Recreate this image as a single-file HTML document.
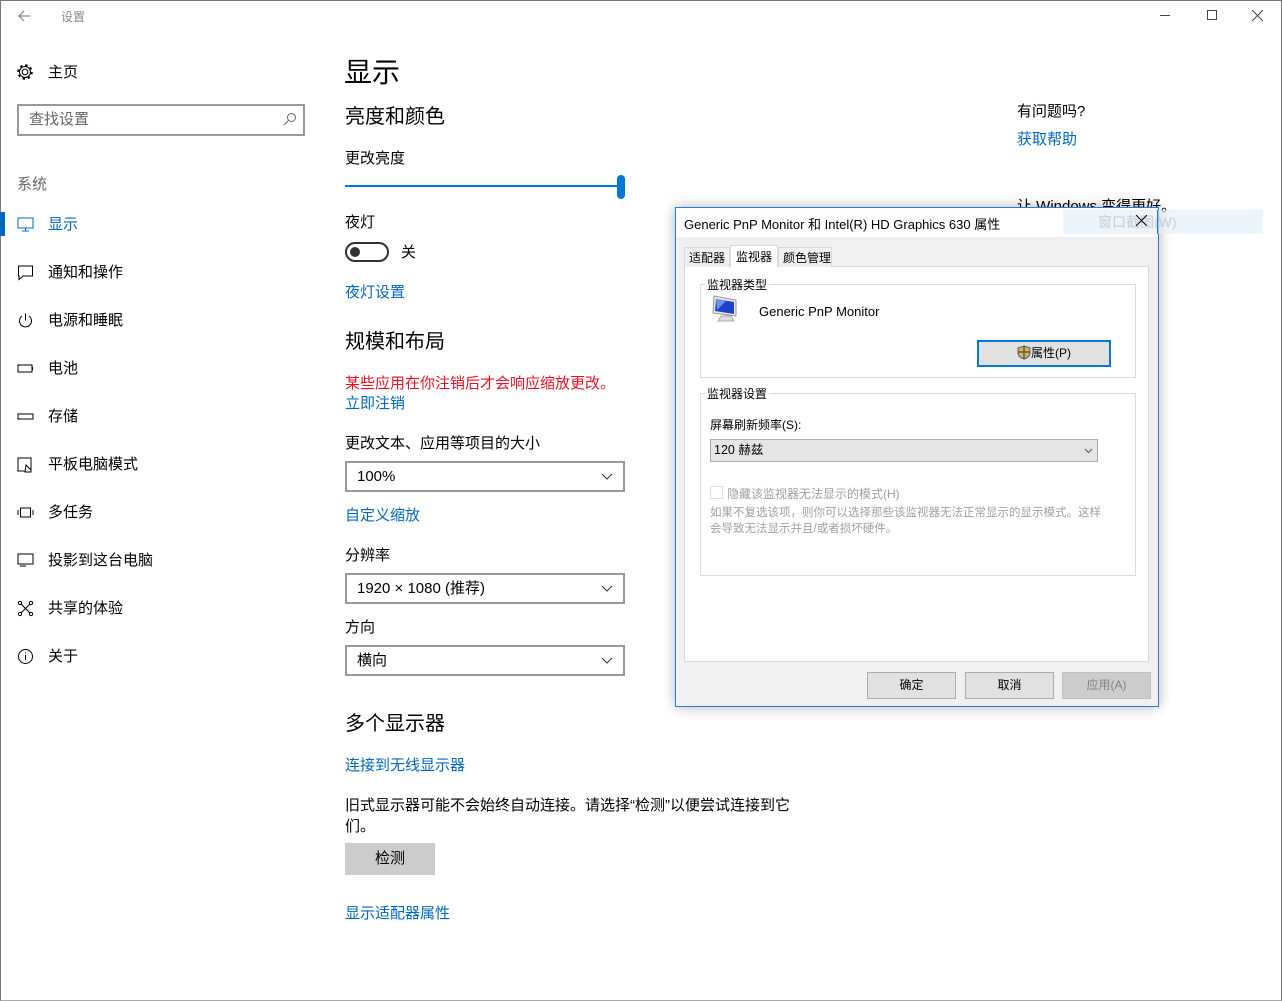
<!DOCTYPE html>
<html><head><meta charset="utf-8"><style>
*{margin:0;padding:0;box-sizing:border-box}
body{width:1282px;height:1001px;background:#fff;position:relative;overflow:hidden;font-family:"Liberation Sans","Noto Sans CJK SC",sans-serif;color:#000}
.a{position:absolute;white-space:nowrap}
.n{font-size:15px;line-height:20px}
.blue{color:#0067c0}
.ic{position:absolute;left:17px;width:17px;height:17px}
.dd{position:absolute;left:345px;width:280px;height:31px;border:2px solid #999;font-size:15px;line-height:27px;padding-left:10px}
.dd svg{position:absolute;right:10px;top:10px}
.dlg{font-size:12px}
.btn{position:absolute;height:27px;background:#e1e1e1;border:1px solid #adadad;text-align:center;line-height:25px;font-size:12px}
</style></head><body>
<div class="a" style="left:0;top:0;width:1282px;height:1001px;border:1px solid #777;border-bottom-color:#aaa"></div>
<svg class="a" style="left:17px;top:9px" width="14" height="14" viewBox="0 0 14 14"><path d="M13 7H2M7 2L2 7l5 5" stroke="#888" fill="none" stroke-width="1.2"/></svg>
<div class="a" style="left:61px;top:8px;font-size:12px;color:#888">设置</div>
<div class="a" style="left:1160px;top:15px;width:10px;height:1px;background:#444"></div>
<div class="a" style="left:1207px;top:10px;width:10px;height:10px;border:1px solid #444"></div>
<svg class="a" style="left:1252px;top:10px" width="11" height="11"><path d="M0 0L11 11M11 0L0 11" stroke="#444"/></svg>

<svg class="ic" style="top:63px;left:16px;width:18px;height:18px" viewBox="0 0 17 17"><circle cx="8.5" cy="8.5" r="2.7" fill="none" stroke="#000"/><circle cx="8.5" cy="8.5" r="6.3" fill="none" stroke="#000" stroke-width="2" stroke-dasharray="2.2 2.75"/><circle cx="8.5" cy="8.5" r="5.2" fill="none" stroke="#000"/></svg>
<div class="a n" style="left:48px;top:63px">主页</div>
<div class="a" style="left:17px;top:104px;width:288px;height:32px;border:2px solid #999;font-size:15px;line-height:28px;padding-left:10px;color:#666">查找设置</div>
<svg class="a" style="left:283px;top:112px" width="14" height="14"><circle cx="8.5" cy="5.5" r="4" fill="none" stroke="#666"/><path d="M5.5 8.5L1 13" stroke="#666"/></svg>
<div class="a n" style="left:17px;top:175px;color:#666">系统</div>
<div class="a" style="left:0;top:212px;width:5px;height:24px;background:#0067c0"></div>
<svg class="ic" style="top:216px" viewBox="0 0 17 17"><rect x="1" y="2" width="15" height="10" fill="none" stroke="#0067c0"/><path d="M8.5 12v3M5 15h7" stroke="#0067c0"/></svg>
<div class="a n blue" style="left:48px;top:215px">显示</div>
<svg class="ic" style="top:264px" viewBox="0 0 17 17"><path d="M1.5 2h14v10H6l-4 3.5V12h-.5z" fill="none" stroke="#000"/></svg>
<div class="a n" style="left:48px;top:263px">通知和操作</div>
<svg class="ic" style="top:312px" viewBox="0 0 17 17"><path d="M5 4a6 6 0 1 0 7 0M8.5 1.5v7" fill="none" stroke="#000"/></svg>
<div class="a n" style="left:48px;top:311px">电源和睡眠</div>
<svg class="ic" style="top:360px" viewBox="0 0 17 17"><rect x="1" y="5" width="14" height="7" fill="none" stroke="#000"/><path d="M15.5 7v3" stroke="#000"/></svg>
<div class="a n" style="left:48px;top:359px">电池</div>
<svg class="ic" style="top:408px" viewBox="0 0 17 17"><rect x="1" y="6" width="15" height="5" fill="none" stroke="#000"/></svg>
<div class="a n" style="left:48px;top:407px">存储</div>
<svg class="ic" style="top:456px" viewBox="0 0 17 17"><rect x="1" y="2" width="13" height="13" fill="none" stroke="#000"/><path d="M9 9l5 5v2H8z" fill="#fff" stroke="#000"/></svg>
<div class="a n" style="left:48px;top:455px">平板电脑模式</div>
<svg class="ic" style="top:504px" viewBox="0 0 17 17"><rect x="3.5" y="4" width="10" height="9" fill="none" stroke="#000"/><path d="M1 6v5M16 6v5" stroke="#000"/></svg>
<div class="a n" style="left:48px;top:503px">多任务</div>
<svg class="ic" style="top:552px" viewBox="0 0 17 17"><rect x="1" y="2" width="15" height="10" fill="none" stroke="#000"/><path d="M3 14h6" stroke="#000"/></svg>
<div class="a n" style="left:48px;top:551px">投影到这台电脑</div>
<svg class="ic" style="top:600px" viewBox="0 0 17 17"><path d="M3 3l11 11M14 3L3 14" stroke="#000"/><circle cx="3" cy="3" r="1.6" fill="#fff" stroke="#000"/><circle cx="14" cy="3" r="1.6" fill="#fff" stroke="#000"/><circle cx="3" cy="14" r="1.6" fill="#fff" stroke="#000"/><circle cx="14" cy="14" r="1.6" fill="#fff" stroke="#000"/></svg>
<div class="a n" style="left:48px;top:599px">共享的体验</div>
<svg class="ic" style="top:648px" viewBox="0 0 17 17"><circle cx="8.5" cy="8.5" r="7" fill="none" stroke="#000"/><path d="M8.5 7v5M8.5 4.5v1" stroke="#000"/></svg>
<div class="a n" style="left:48px;top:647px">关于</div>

<div class="a" style="left:344px;top:55px;font-size:28px;line-height:36px">显示</div>
<div class="a" style="left:345px;top:104px;font-size:20px;line-height:26px">亮度和颜色</div>
<div class="a n" style="left:345px;top:149px">更改亮度</div>
<div class="a" style="left:345px;top:185px;width:275px;height:2px;background:#0078d7"></div>
<div class="a" style="left:617px;top:175px;width:8px;height:24px;background:#0078d7;border-radius:4px"></div>
<div class="a n" style="left:345px;top:213px">夜灯</div>
<div class="a" style="left:345px;top:242px;width:44px;height:20px;border:2px solid #333;border-radius:10px"></div>
<div class="a" style="left:350px;top:247px;width:10px;height:10px;background:#333;border-radius:5px"></div>
<div class="a n" style="left:401px;top:243px">关</div>
<div class="a n blue" style="left:345px;top:283px">夜灯设置</div>
<div class="a" style="left:345px;top:329px;font-size:20px;line-height:26px">规模和布局</div>
<div class="a n" style="left:345px;top:374px;color:#e81123">某些应用在你注销后才会响应缩放更改。</div>
<div class="a n blue" style="left:345px;top:394px">立即注销</div>
<div class="a n" style="left:345px;top:434px">更改文本、应用等项目的大小</div>
<div class="dd" style="top:461px">100%<svg width="12" height="8"><path d="M1 1l5 5 5-5" fill="none" stroke="#333"/></svg></div>
<div class="a n blue" style="left:345px;top:506px">自定义缩放</div>
<div class="a n" style="left:345px;top:546px">分辨率</div>
<div class="dd" style="top:573px">1920 × 1080 (推荐)<svg width="12" height="8"><path d="M1 1l5 5 5-5" fill="none" stroke="#333"/></svg></div>
<div class="a n" style="left:345px;top:618px">方向</div>
<div class="dd" style="top:645px">横向<svg width="12" height="8"><path d="M1 1l5 5 5-5" fill="none" stroke="#333"/></svg></div>
<div class="a" style="left:345px;top:711px;font-size:20px;line-height:26px">多个显示器</div>
<div class="a n blue" style="left:345px;top:756px">连接到无线显示器</div>
<div class="a n" style="left:345px;top:796px">旧式显示器可能不会始终自动连接。请选择“检测”以便尝试连接到它</div>
<div class="a n" style="left:345px;top:817px">们。</div>
<div class="a" style="left:345px;top:843px;width:90px;height:32px;background:#ccc;font-size:15px;line-height:32px;text-align:center">检测</div>
<div class="a n blue" style="left:345px;top:904px">显示适配器属性</div>

<div class="a n" style="left:1017px;top:102px">有问题吗?</div>
<div class="a n blue" style="left:1017px;top:130px">获取帮助</div>
<div class="a n" style="left:1017px;top:197px">让 Windows 变得更好。</div>

<div class="a dlg" style="left:675px;top:207px;width:484px;height:500px;background:#f0f0f0;border:1px solid #2b79d0;box-shadow:0 0 12px rgba(0,0,0,.3)">
<div class="a" style="left:0;top:0;width:482px;height:29px;background:#fff"></div>
<div class="a" style="left:8px;top:6px;font-size:13px">Generic PnP Monitor 和 Intel(R) HD Graphics 630 属性</div>
<div class="a" style="left:8px;top:58px;width:465px;height:396px;background:#fff;border:1px solid #d9d9d9"></div>
<div class="a" style="left:8px;top:39px;width:46px;height:20px;border:1px solid #d9d9d9;border-bottom:none;background:#f0f0f0;padding-left:4px;line-height:20px">适配器</div>
<div class="a" style="left:54px;top:37px;width:48px;height:22px;border:1px solid #d9d9d9;border-bottom:none;background:#fff;padding-left:5px;line-height:22px">监视器</div>
<div class="a" style="left:102px;top:39px;width:54px;height:20px;border:1px solid #d9d9d9;border-bottom:none;background:#f0f0f0;padding-left:4px;line-height:20px">颜色管理</div>
<div class="a" style="left:24px;top:76px;width:436px;height:94px;border:1px solid #dcdcdc"></div>
<div class="a" style="left:29px;top:68px;background:#fff;padding:0 2px">监视器类型</div>
<svg class="a" style="left:33px;top:85px" width="32" height="36"><path d="M5 3l22 4v16L4 20z" fill="#e6e6e6" stroke="#999"/><path d="M7 6l18 3v12L6 18z" fill="#1c43c9"/><path d="M7 6l10 2-9 9z" fill="#6f8fe8"/><path d="M12 23h10l3 5H9z" fill="#ddd" stroke="#aaa"/></svg>
<div class="a" style="left:83px;top:96px;font-size:13px">Generic PnP Monitor</div>
<div class="btn" style="left:301px;top:132px;width:134px;height:27px;border:2px solid #0078d7;line-height:23px"><svg width="14" height="15" style="vertical-align:-3px"><path d="M7 1l6 2v5c0 3-3 5-6 6-3-1-6-3-6-6V3z" fill="#f6b400" stroke="#2c5fb0"/><path d="M7 1v13M1 7h12" stroke="#2c5fb0" stroke-width="1.5"/></svg>属性(P)</div>
<div class="a" style="left:24px;top:185px;width:436px;height:183px;border:1px solid #dcdcdc"></div>
<div class="a" style="left:29px;top:177px;background:#fff;padding:0 2px">监视器设置</div>
<div class="a" style="left:34px;top:208px">屏幕刷新频率(S):</div>
<div class="a" style="left:34px;top:231px;width:388px;height:23px;background:#e5e5e5;border:1px solid #adadad;padding-left:3px;line-height:21px;font-size:12.5px">120 赫兹<svg style="position:absolute;right:4px;top:8px" width="9" height="6"><path d="M1 1l3.5 3.5L8 1" fill="none" stroke="#555"/></svg></div>
<div class="a" style="left:34px;top:278px;width:13px;height:13px;border:1px solid #ddd"></div>
<div class="a" style="left:51px;top:277px;color:#a0a0a0">隐藏该监视器无法显示的模式(H)</div>
<div class="a" style="left:34px;top:297px;color:#a0a0a0;font-size:11.5px;line-height:16px;white-space:normal;width:400px">如果不复选该项，则你可以选择那些该监视器无法正常显示的显示模式。这样会导致无法显示并且/或者损坏硬件。</div>
<div class="btn" style="left:191px;top:464px;width:89px">确定</div>
<div class="btn" style="left:289px;top:464px;width:89px">取消</div>
<div class="btn" style="left:386px;top:464px;width:89px;background:#ccc;border-color:#bfbfbf;color:#838383">应用(A)</div>
</div>
<div class="a" style="left:1063px;top:210px;width:200px;height:24px;background:rgba(225,238,250,.6);font-size:14px;line-height:24px;color:#ccc;padding-left:35px">窗口截图(W)</div>
<div class="a" style="left:1157px;top:210px;width:1px;height:24px;background:#2b79d0"></div>
<svg class="a" style="left:1136px;top:215px" width="11" height="11"><path d="M0 0L11 11M11 0L0 11" stroke="#000"/></svg>
</body></html>
